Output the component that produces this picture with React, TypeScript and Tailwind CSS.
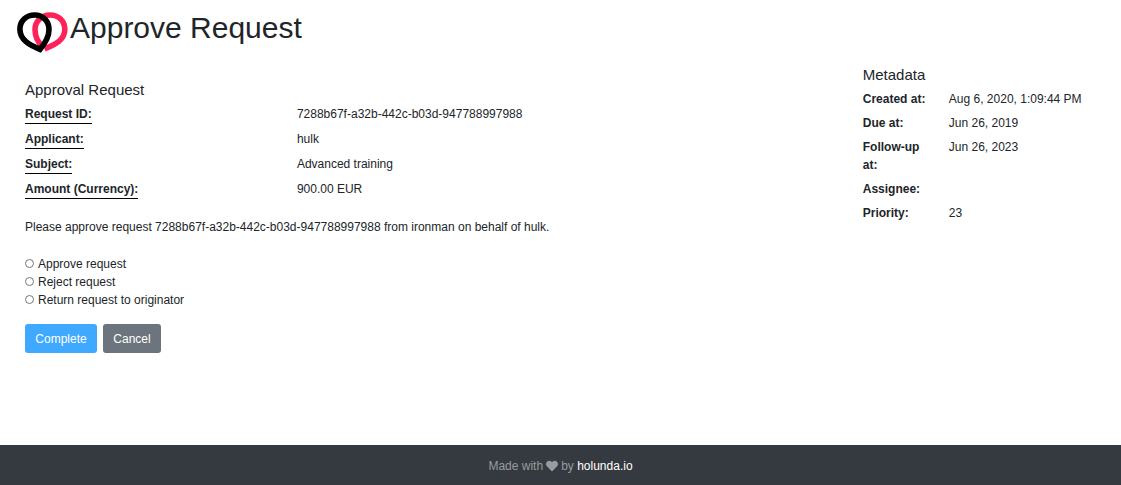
import { FaHeart } from "react-icons/fa";

const details = [
  { label: "Request ID:", value: "7288b67f-a32b-442c-b03d-947788997988" },
  { label: "Applicant:", value: "hulk" },
  { label: "Subject:", value: "Advanced training" },
  { label: "Amount (Currency):", value: "900.00 EUR" },
];

const metadata = [
  { label: "Created at:", value: "Aug 6, 2020, 1:09:44 PM" },
  { label: "Due at:", value: "Jun 26, 2019" },
  { label: "Follow-up at:", value: "Jun 26, 2023" },
  { label: "Assignee:", value: "" },
  { label: "Priority:", value: "23" },
];

const decisions = [
  { id: "approve", label: "Approve request" },
  { id: "reject", label: "Reject request" },
  { id: "return", label: "Return request to originator" },
];

function Logo() {
  return (
    <svg className="h-11 w-[52px] shrink-0" viewBox="0 0 52 44" fill="none" strokeWidth="5.6" aria-hidden="true">
      <path d="M28.5 39C36 35.5 48.8 31.5 48.8 19.5C48.8 11 42.5 5 34 5C25.5 5 19 11.5 19 19.5C19 27 22.5 33 27 37" stroke="#ff2259" />
      <path d="M24 39.4C13.5 34.8 3.9 30 3.9 19.3C3.9 11 10.2 5 18.7 5C27.2 5 33 11.5 33 19.5C33 28 28.5 34 24 39.4Z" stroke="#000" />
    </svg>
  );
}

export default function App() {
  return (
    <div className="flex min-h-screen flex-col bg-white font-['Liberation_Sans',Arial,sans-serif] text-xs leading-[18px] text-[#212529]">
      <header className="flex items-start gap-0.5 px-4 pt-2.5">
        <Logo />
        <h1 className="text-3xl leading-9">Approve Request</h1>
      </header>

      <main className="flex grow items-start pt-3 pb-6">
        <section className="w-3/4 pt-[15px] pl-[25px]">
          <h2 className="mb-1.5 text-[15px] leading-[18px]">Approval Request</h2>
          <dl>
            {details.map((item) => (
              <div key={item.label} className="mb-1.5 flex">
                <dt className="w-1/3 font-bold">
                  <span className="inline-block border-b border-black">{item.label}</span>
                </dt>
                <dd className="w-2/3">{item.value}</dd>
              </div>
            ))}
          </dl>
          <p className="mt-[19px]">
            Please approve request 7288b67f-a32b-442c-b03d-947788997988 from ironman on behalf of hulk.
          </p>
          <form onSubmit={(event) => event.preventDefault()}>
            <fieldset className="mt-[19px]" aria-label="Decision">
              {decisions.map((decision) => (
                <div key={decision.id} className="flex items-start gap-1">
                  <input
                    type="radio"
                    name="decision"
                    id={decision.id}
                    value={decision.id}
                    className="mt-1 size-[9px] appearance-none rounded-full border border-[#767676] bg-white checked:bg-[#3fa9ff]"
                  />
                  <label htmlFor={decision.id}>{decision.label}</label>
                </div>
              ))}
            </fieldset>
            <div className="mt-[15px] flex gap-1.5">
              <button type="submit" className="h-[29px] min-w-[72px] rounded-[3px] bg-[#3fa9ff] px-2.5 text-white">
                Complete
              </button>
              <button type="button" className="h-[29px] min-w-[58px] rounded-[3px] bg-[#6c757d] px-2.5 text-white">
                Cancel
              </button>
            </div>
          </form>
        </section>

        <aside className="w-1/4 pl-[22px]">
          <h2 className="mb-1.5 text-[15px] leading-[18px]">Metadata</h2>
          <dl>
            {metadata.map((item) => (
              <div key={item.label} className="mb-1.5 flex">
                <dt className="w-1/3 pr-4 font-bold">{item.label}</dt>
                <dd className="w-2/3">{item.value}</dd>
              </div>
            ))}
          </dl>
        </aside>
      </main>

      <footer className="flex h-10 items-center justify-center gap-[3px] bg-[#343a40] pt-0.5 text-[#999c9f]">
        <span>Made with</span>
        <FaHeart className="size-3" aria-label="love" />
        <span>
          by{" "}
          <a href="#holunda" className="text-white">
            holunda.io
          </a>
        </span>
      </footer>
    </div>
  );
}
